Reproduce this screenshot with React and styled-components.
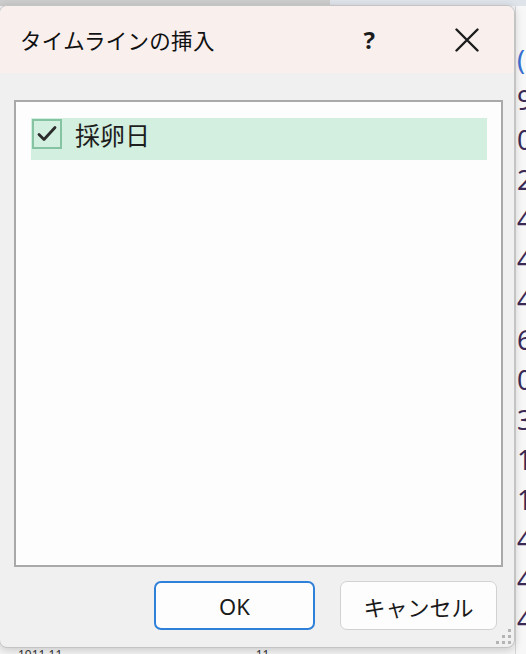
import React from 'react';
import styled, { createGlobalStyle } from 'styled-components';

/**
 * @section Styles
 */

const Global = createGlobalStyle`
  html, body {
    margin: 0;
    padding: 0;
  }
  body {
    font-family: "Noto Sans CJK JP", "Noto Sans", sans-serif;
    background: #f4f5f7;
  }
`;

const Page = styled.div`
  height: 654px;
  overflow: hidden;
  position: relative;
  width: 526px;
`;

const Backdrop = styled.div`
  display: grid;
  grid-template-columns: 1fr 11px;
  grid-template-rows: 6px 1fr 6px;
  height: 100%;
`;

const TopStrip = styled.div`
  background: linear-gradient(90deg, #cdcdcd 0 330px, #dfe4ea 330px);
  grid-column: 1 / 3;
`;

const Sheet = styled.div`
  background: #f7f7f7;
  border-left: 1px solid #d6d6d6;
  display: flex;
  flex-direction: column;
  grid-column: 2;
  grid-row: 2 / 4;
  overflow: hidden;
  padding-top: 34px;
`;

const Cell = styled.div`
  color: ${p => p.color || '#3b2a55'};
  font-family: "Noto Sans", sans-serif;
  font-size: 27px;
  height: 40px;
  line-height: 40px;
  margin-left: 1px;
`;

const BottomStrip = styled.div`
  background: #f4f4f4;
  color: #333;
  font-family: "Noto Sans", sans-serif;
  font-size: 12px;
  grid-column: 1;
  grid-row: 3;
  line-height: 14px;
  overflow: hidden;
  padding-left: 18px;
  white-space: nowrap;
`;

const Dialog = styled.div`
  background: #f0f0f0;
  border: 1px solid #c4c4c4;
  border-radius: 8px;
  box-shadow: 0 2px 8px rgba(0, 0, 0, 0.18);
  display: flex;
  flex-direction: column;
  height: 641px;
  left: -1px;
  overflow: hidden;
  position: absolute;
  top: 5px;
  width: 514px;
`;

const TitleBar = styled.div`
  align-items: center;
  background: #f9f0ee;
  display: flex;
  flex: 0 0 67px;
  padding-left: 20px;
`;

const Title = styled.div`
  color: #111;
  flex: 1;
  font-size: 21.5px;
  letter-spacing: 0.3px;
`;

const Help = styled.div`
  color: #1c1c1c;
  font-family: "Noto Sans", sans-serif;
  font-size: 24px;
  font-weight: 700;
  margin-right: 80px;
`;

const Close = styled.svg`
  height: 24px;
  margin-right: 35px;
  width: 24px;
`;

const Body = styled.div`
  display: flex;
  flex: 1;
  flex-direction: column;
  padding: 27px 11px 0 14px;
`;

const ListBox = styled.div`
  background: #fdfdfd;
  border: 2px solid #a9a9a9;
  box-sizing: border-box;
  height: 467px;
  padding: 16px 14px 0 15px;
`;

const Row = styled.div`
  align-items: flex-start;
  background: #d3efdf;
  display: flex;
  height: 42px;
`;

const Check = styled.div`
  align-items: center;
  background: #d3efdf;
  border: 2px solid #86c3a2;
  box-sizing: border-box;
  display: flex;
  height: 30px;
  justify-content: center;
  margin: 1px 13px 0 1px;
  width: 30px;
`;

const Label = styled.div`
  color: #1e1e1e;
  font-size: 25px;
  line-height: 30px;
  padding-top: 1px;
`;

const Buttons = styled.div`
  display: flex;
  gap: 25px;
  justify-content: flex-end;
  padding: 14px 6px 0 0;
`;

const Button = styled.div`
  align-items: center;
  background: #fdfdfd;
  border: ${p => (p.primary ? '2px solid #2f80d8' : '1px solid #d2d2d2')};
  border-radius: 7px;
  box-sizing: border-box;
  color: #1a1a1a;
  display: flex;
  font-family: ${p => (p.primary ? '"Noto Sans", sans-serif' : '"Noto Sans CJK JP", sans-serif')};
  font-size: 22px;
  height: 49px;
  justify-content: center;
  width: ${p => p.width}px;
`;

const Grip = styled.svg`
  bottom: 2px;
  position: absolute;
  right: 2px;
`;

/**
 * @section Markup
 */

const cells = [
  ['(', '#3a6fd0'], ['9'], ['0'], ['2'], ['4'], ['4'], ['4'], ['6'], ['0'],
  ['3'], ['1'], ['1'], ['4'], ['4'], ['4'],
];

export default function App() {
  return (
    <Page>
      <Global />
      <Backdrop>
        <TopStrip />
        <div />
        <Sheet>
          {cells.map(([v, c], i) => (
            <Cell key={i} color={c}>{v}</Cell>
          ))}
        </Sheet>
        <BottomStrip>1911 11 &nbsp;&nbsp;&nbsp;&nbsp;&nbsp;&nbsp;&nbsp;&nbsp;&nbsp;&nbsp;&nbsp;&nbsp;&nbsp;&nbsp;&nbsp;&nbsp;&nbsp;&nbsp;&nbsp;&nbsp;&nbsp;&nbsp;&nbsp;&nbsp;&nbsp;&nbsp;&nbsp;&nbsp;&nbsp;&nbsp;&nbsp;&nbsp;&nbsp;&nbsp;&nbsp;&nbsp;&nbsp;&nbsp;&nbsp;&nbsp;&nbsp;&nbsp;&nbsp;&nbsp;&nbsp;&nbsp;&nbsp;&nbsp;&nbsp;&nbsp;&nbsp;&nbsp;&nbsp;&nbsp;&nbsp;&nbsp;&nbsp;&nbsp;&nbsp;&nbsp; 11</BottomStrip>
      </Backdrop>

      <Dialog>
        <TitleBar>
          <Title>タイムラインの挿入</Title>
          <Help>?</Help>
          <Close viewBox="0 0 24 24">
            <path d="M1.5 1.5 L22.5 22.5 M22.5 1.5 L1.5 22.5" stroke="#1c1c1c" strokeWidth="2.4" strokeLinecap="round" />
          </Close>
        </TitleBar>
        <Body>
          <ListBox>
            <Row>
              <Check>
                <svg width="20" height="18" viewBox="0 0 20 18">
                  <path d="M2 9.5 L7 14.5 L18 2.5" fill="none" stroke="#2b2b2b" strokeWidth="2.8" strokeLinecap="round" strokeLinejoin="round" />
                </svg>
              </Check>
              <Label>採卵日</Label>
            </Row>
          </ListBox>
          <Buttons>
            <Button primary width={161}>OK</Button>
            <Button width={157}>キャンセル</Button>
          </Buttons>
        </Body>
        <Grip width="18" height="18" viewBox="0 0 18 18">
          {[[14, 2], [8, 8], [14, 8], [2, 14], [8, 14], [14, 14]].map(([x, y], i) => (
            <rect key={i} x={x} y={y} width="3" height="3" fill="#b4b4b4" />
          ))}
        </Grip>
      </Dialog>
    </Page>
  );
}
